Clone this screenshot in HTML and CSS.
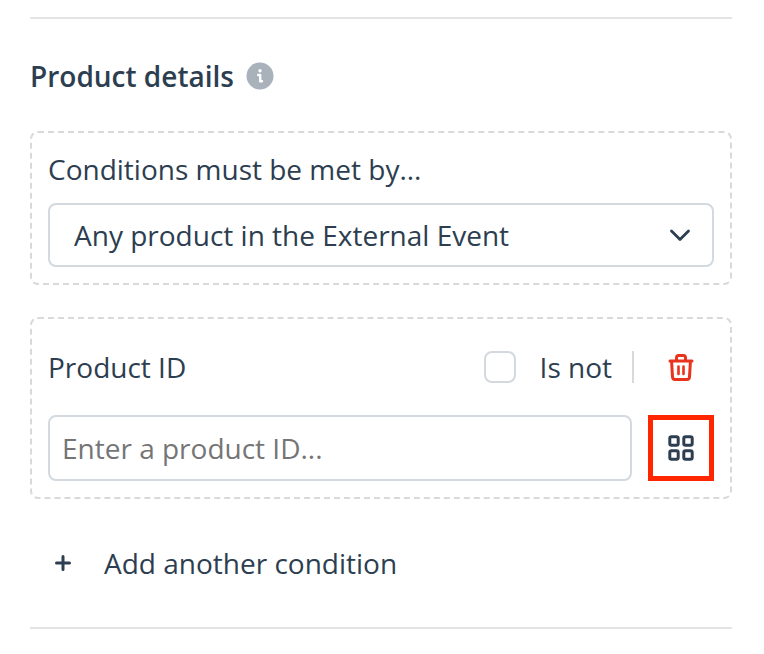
FILE: index.html
```html
<!DOCTYPE html>
<html lang="en">
<head>
    <meta charset="UTF-8">
    <meta name="viewport" content="width=device-width, initial-scale=1.0">
    <title>Product details</title>
    <link rel="stylesheet" href="styles.css">
</head>
<body>
    <form class="product-details">
        <div class="heading">
            <h2>Product details</h2>
            <svg class="info" viewBox="0 0 28 28" aria-hidden="true">
                <circle cx="14" cy="14" r="13.5" fill="#a9b2bb"/>
                <circle cx="14" cy="8.700" r="1.700" fill="#fff"/>
                <path d="M12.200 13h2v6.200h1.800" fill="none" stroke="#fff" stroke-width="2.400" stroke-linecap="round" stroke-linejoin="round"/>
            </svg>
        </div>

        <div class="card">
            <label class="match-label" for="match">Conditions must be met by...</label>
            <div class="select-wrap">
                <select id="match" name="match">
                    <option>Any product in the External Event</option>
                </select>
                <svg class="chevron" viewBox="0 0 24 24" aria-hidden="true">
                    <path d="M3.5 8l8.5 8.500 8.500-8.500" fill="none" stroke="#2c3e50" stroke-width="2.800" stroke-linecap="round" stroke-linejoin="round"/>
                </svg>
            </div>
        </div>

        <div class="card">
            <div class="condition-row">
                <label class="condition-name" for="productId">Product ID</label>
                <input type="checkbox" id="isNot" name="isNot">
                <label class="is-not" for="isNot">Is not</label>
                <button type="button" class="icon-button delete" aria-label="Delete condition">
                    <svg viewBox="0 0 28 30" aria-hidden="true">
                        <g fill="none" stroke="#e8341c" stroke-width="3" stroke-linecap="round" stroke-linejoin="round">
                            <path d="M3 9h22"/>
                            <path d="M9.500 8.500V6Q9.500 3.500 11.500 3.500h5Q18.500 3.500 18.500 6V8.500"/>
                            <path d="M4.600 9.500l.9 15.300Q5.700 27.500 8 27.500h12q2.300 0 2.500-2.700L23.400 9.500"/>
                            <path d="M11.500 14.500v7.500M16.500 14.500v7.500" stroke-width="2.600"/>
                        </g>
                    </svg>
                </button>
            </div>
            <div class="input-row">
                <input type="text" id="productId" name="productId" placeholder="Enter a product ID...">
                <button type="button" class="icon-button browse" aria-label="Browse products">
                    <svg viewBox="0 0 28 28" aria-hidden="true">
                        <g fill="none" stroke="#2c3e50" stroke-width="3">
                            <rect x="2.800" y="2.800" width="8.400" height="8.400" rx="1.800"/>
                            <rect x="16.800" y="2.800" width="8.400" height="8.400" rx="1.800"/>
                            <rect x="2.800" y="16.800" width="8.400" height="8.400" rx="1.800"/>
                            <rect x="16.800" y="16.800" width="8.400" height="8.400" rx="1.800"/>
                        </g>
                    </svg>
                </button>
            </div>
        </div>

        <button type="button" class="add-condition">
            <svg viewBox="0 0 18 18" aria-hidden="true">
                <path d="M9 2.500v13M2.500 9h13" stroke="#2c3e50" stroke-width="3" stroke-linecap="round"/>
            </svg>
            Add another condition
        </button>
    </form>
</body>
</html>
```

FILE: styles.css
```css
* {
    box-sizing: border-box;
}
body {
    margin: 0;
    padding: 17px 32px 24px 30px;
    background-color: #fff;
    color: #2c3e50;
    font-family: 'Open Sans', 'Noto Sans', sans-serif;
    font-size: 28px;
    line-height: 40px;
}
input, select, button {
    margin: 0;
    color: inherit;
    font: inherit;
}
button {
    border: none;
    background: none;
    cursor: pointer;
}
svg {
    display: block;
    flex: none;
}
.product-details {
    border-top: 2px solid #e4e4e4;
    border-bottom: 2px solid #e4e4e4;
    padding: 37px 0 32px;
}
.heading {
    display: flex;
    align-items: center;
    gap: 12px;
    margin-bottom: 35px;
}
.heading h2 {
    margin: 0;
    font-size: 28px;
    font-weight: 600;
}
.info {
    width: 28px;
    height: 28px;
}
.card {
    margin-bottom: 32px;
    padding: 16px;
    border: 2px dashed #d9d9d9;
    border-radius: 8px;
}
.match-label {
    display: block;
    margin-bottom: 14px;
}
.select-wrap {
    position: relative;
}
select {
    display: block;
    width: 100%;
    height: 64px;
    padding: 0 64px 0 24px;
    border: 2px solid #d3d9de;
    border-radius: 8px;
    background-color: #fff;
    appearance: none;
}
.chevron {
    position: absolute;
    top: 20px;
    right: 22px;
    width: 24px;
    height: 24px;
    pointer-events: none;
}
.condition-row {
    display: flex;
    align-items: center;
    height: 64px;
    margin-bottom: 16px;
}
.condition-name {
    flex: 1;
}
input[type="checkbox"] {
    width: 32px;
    height: 32px;
    border: 2px solid #d3d9de;
    border-radius: 8px;
    background-color: #fff;
    appearance: none;
}
input[type="checkbox"]:checked {
    background-color: #2c3e50;
}
.is-not {
    margin: 0 14px 0 24px;
    padding-right: 20px;
    border-right: 2px solid #d9d9d9;
    line-height: 32px;
}
.icon-button {
    display: flex;
    align-items: center;
    justify-content: center;
    flex: none;
    width: 66px;
    height: 66px;
    padding: 0;
}
.icon-button svg {
    width: 28px;
}
.input-row {
    display: flex;
    gap: 16px;
}
input[type="text"] {
    flex: 1;
    min-width: 0;
    height: 66px;
    padding: 0 12px;
    border: 2px solid #d3d9de;
    border-radius: 8px;
}
input::placeholder {
    color: #757575;
    opacity: 1;
}
.browse {
    border: 5px solid #ff2600;
}
.add-condition {
    display: flex;
    align-items: center;
    gap: 32px;
    height: 64px;
    padding: 0 24px;
}
.add-condition svg {
    width: 18px;
    height: 18px;
}
```
